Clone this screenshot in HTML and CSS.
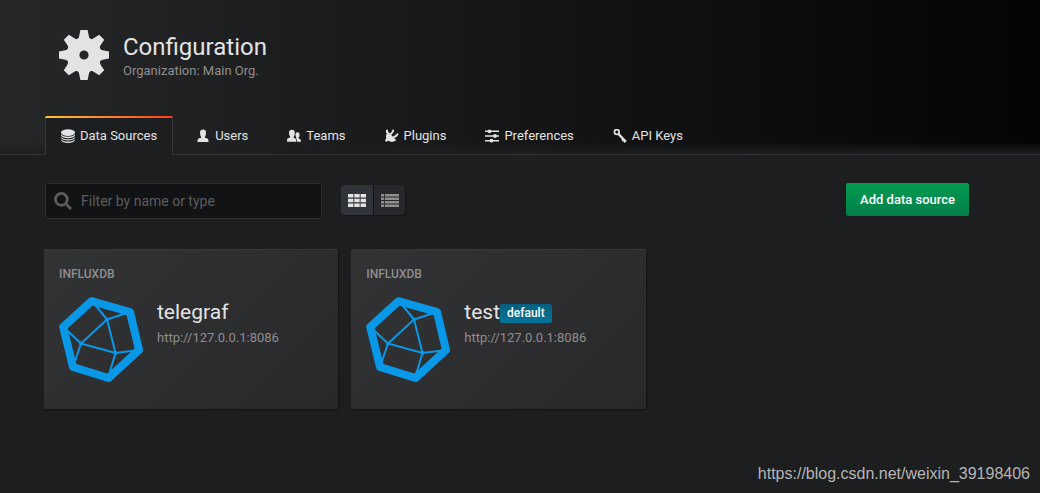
FILE: index.html
```html
<!DOCTYPE html>
<html lang="en">
<head>
<meta charset="utf-8">
<meta name="viewport" content="width=device-width, initial-scale=1">
<title>Configuration: Data Sources</title>
<link rel="stylesheet" href="styles.css">
</head>
<body>
<svg class="sprite" aria-hidden="true">
  <symbol id="influx" viewBox="4 7 85 85">
    <g fill="none" stroke="#0898e7" stroke-linejoin="round">
      <path stroke-width="8" d="M36.500 11.200 75 22 84 60 53.500 88 18 77 8.200 37Z"/>
      <path stroke-width="2" d="M52 29.500 26 53.500 60.500 63ZM37 11 52 29.500 75 22M8.500 37 26 53.500 18 77M53 88 60.500 63 84 60"/>
    </g>
    <g fill="#0898e7"><circle cx="52" cy="29.500" r="2"/><circle cx="26" cy="53.500" r="2"/><circle cx="60.500" cy="63" r="2"/></g>
  </symbol>
</svg>
<header class="page-header">
  <div class="page-title">
    <svg class="page-icon" viewBox="-25 -25 50 50" aria-hidden="true">
      <defs><path id="tooth" d="M-7.500-14Q-4.800-17-4.600-20L-3.600-25H3.600L4.600-20Q4.800-17 7.500-14Z"/></defs>
      <path fill-rule="evenodd" d="M-17.500 0A17.500 17.500 0 1 1 17.500 0A17.500 17.500 0 1 1-17.500 0ZM-4.600 0A4.600 4.600 0 1 0 4.600 0A4.600 4.600 0 1 0-4.600 0Z"/>
      <use href="#tooth"/><use href="#tooth" transform="rotate(45)"/><use href="#tooth" transform="rotate(90)"/><use href="#tooth" transform="rotate(135)"/><use href="#tooth" transform="rotate(180)"/><use href="#tooth" transform="rotate(225)"/><use href="#tooth" transform="rotate(270)"/><use href="#tooth" transform="rotate(315)"/>
    </svg>
    <div>
      <h1>Configuration</h1>
      <p class="page-sub">Organization: Main Org.</p>
    </div>
  </div>
  <nav class="tabs">
    <a class="tab tab-active" href="#sources" aria-current="page"><svg viewBox="0 0 14 14"><ellipse cx="7" cy="3.600" rx="7" ry="3.400"/><path d="M0 5.300Q2 7.800 7 7.800T14 5.300V6.500Q12.500 9.200 7 9.200T0 6.500ZM0 8Q2 10.300 7 10.300T14 8V8.800Q12.500 11.500 7 11.500T0 8.800ZM0 10.300Q2 12.600 7 12.600T14 10.300V11Q12.500 14 7 14T0 11Z"/></svg>Data Sources</a>
    <a class="tab" href="#users"><svg viewBox="0 0 14 14"><path d="M4 3.500Q4 .5 7 .5T10 3.500Q10 6.500 9 8V9L11 9.300Q12.500 10 12.500 12V13H1.500V12Q1.500 10 3 9.300L5 9V8Q4 6.500 4 3.500Z"/></svg>Users</a>
    <a class="tab" href="#teams"><svg viewBox="0 0 14 14"><path d="M2 4Q2 .7 4.900 .7T7.800 4Q7.800 6.500 6.700 8V8.800L8 9.200Q9.400 10 9.400 12.800H0V11Q0 9.500 1.500 9L3.200 8.600V8Q2 6.500 2 4Z"/><path d="M8.400 5.500Q8.400 3.300 10.500 3.300T12.600 5.500Q12.600 7.500 11.600 8.800V9.600L13 10Q14 10.500 14 12.800H10.100Q10.100 10 8.800 8.900L9.500 8.700Q8.400 7.500 8.400 5.500Z"/></svg>Teams</a>
    <a class="tab" href="#plugins"><svg viewBox="0 0 14 14"><path d="M3.200 2.800Q.2 5.500 1.300 9L0 11.500Q.5 13 2 12.500L3.500 11.800Q7 14.300 11.300 11.200Z"/><path d="M1 .8H3V4H1Z"/><path fill="none" stroke="currentColor" stroke-width="1.900" stroke-linecap="round" d="M5.700 5Q7.600 3.600 8.200 1.500M8.800 8.200Q11.200 7.400 12.500 5.200"/></svg>Plugins</a>
    <a class="tab" href="#preferences"><svg viewBox="0 0 14 14"><path d="M0 1.500H14V3H0ZM0 6.200H14V7.700H0ZM0 11H14V12.500H0Z"/><circle cx="4.500" cy="2.300" r="1.900"/><circle cx="10" cy="7" r="1.900"/><circle cx="6.500" cy="11.700" r="1.900"/></svg>Preferences</a>
    <a class="tab" href="#keys"><svg viewBox="0 0 14 14"><g fill="none" stroke="currentColor"><circle cx="3.800" cy="3" r="2.400" stroke-width="1.700"/><path stroke-width="2.400" d="M5.300 4.800 12.300 12.300"/><path stroke-width="2" d="M9 11.800 11 9.800M11 13.300 13 11.300"/></g></svg>API Keys</a>
  </nav>
</header>
<main class="content">
  <div class="toolbar">
    <label class="search">
      <svg viewBox="0 0 17 17" aria-hidden="true"><circle cx="7" cy="7" r="5.600"/><path d="M11 11 16 16"/></svg>
      <input type="text" placeholder="Filter by name or type" aria-label="Filter by name or type">
    </label>
    <div class="layout-switch">
      <button class="layout-button layout-on" type="button" aria-label="Grid view"><svg viewBox="0 0 18 13"><path d="M0 0H5.400V3.600H0ZM6.300 0H11.700V3.600H6.300ZM12.600 0H18V3.600H12.600ZM0 4.700H5.400V8.300H0ZM6.300 4.700H11.700V8.300H6.300ZM12.600 4.700H18V8.300H12.600ZM0 9.400H5.400V13H0ZM6.300 9.400H11.700V13H6.300ZM12.600 9.400H18V13H12.600Z"/></svg></button>
      <button class="layout-button" type="button" aria-label="List view"><svg viewBox="0 0 18 13"><path d="M0 0H3.200V2.500H0ZM4 0H18V2.500H4ZM0 3.500H3.200V6H0ZM4 3.500H18V6H4ZM0 7H3.200V9.500H0ZM4 7H18V9.500H4ZM0 10.500H3.200V13H0ZM4 10.500H18V13H4Z"/></svg></button>
    </div>
    <button class="add-button" type="button">Add data source</button>
  </div>
  <ul class="cards">
    <li><a class="card" href="#telegraf">
      <span class="card-type">INFLUXDB</span>
      <span class="card-body">
        <svg class="card-logo" aria-hidden="true"><use href="#influx"/></svg>
        <span class="card-details"><span class="card-name">telegraf</span><span class="card-url">http://127.0.0.1:8086</span></span>
      </span>
    </a></li>
    <li><a class="card" href="#test">
      <span class="card-type">INFLUXDB</span>
      <span class="card-body">
        <svg class="card-logo" aria-hidden="true"><use href="#influx"/></svg>
        <span class="card-details"><span class="card-name">test<span class="badge">default</span></span><span class="card-url">http://127.0.0.1:8086</span></span>
      </span>
    </a></li>
  </ul>
</main>
<div class="watermark">https://blog.csdn.net/weixin_39198406</div>
</body>
</html>
```

FILE: styles.css
```css
* { box-sizing: border-box; }
body {
  position: relative;
  min-height: 100vh;
  margin: 0;
  background: #1d1e20;
  color: #d8d9da;
  font: 13px/20px Roboto, sans-serif;
}
h1, p, ul { margin: 0; padding: 0; }
a { color: inherit; text-decoration: none; }
button, input { font: inherit; }
.sprite { position: absolute; width: 0; height: 0; }

.page-header {
  padding: 30px 71px 0 45px;
  background:
    linear-gradient(0deg, #1d1e20, transparent 12px),
    linear-gradient(90deg, #262729, #040404);
  border-bottom: 1px solid #343537;
}
.page-title {
  display: flex;
  gap: 14px;
  padding-left: 14px;
  margin-bottom: 36px;
}
.page-icon { width: 50px; height: 50px; fill: #e3e3e3; }
h1 {
  padding-top: 2px;
  font-size: 24px;
  line-height: 30px;
  font-weight: 400;
  color: #e3e3e3;
}
.page-sub { line-height: 18px; color: #8e8e8e; }

.tabs { display: flex; gap: 7px; margin-bottom: -1px; }
.tab {
  display: flex;
  align-items: center;
  gap: 5px;
  height: 39px;
  padding: 0 16px;
  color: #e3e3e3;
}
.tab svg { width: 14px; height: 14px; fill: currentColor; }
.tab-active {
  position: relative;
  padding: 0 15px;
  border: 1px solid #343537;
  border-bottom: 0;
  border-radius: 3px 3px 0 0;
  background: #1d1e20;
}
.tab-active::before {
  content: "";
  position: absolute;
  top: -1px;
  left: -1px;
  right: -1px;
  height: 2px;
  border-radius: 2px 2px 0 0;
  background: linear-gradient(90deg, #ffc835, #ff3c14);
}

.content { padding: 28px 71px 0 45px; }
.toolbar { display: flex; align-items: flex-start; }
.search {
  display: flex;
  align-items: center;
  gap: 9px;
  width: 277px;
  height: 36px;
  padding: 0 9px 0 8px;
  border: 1px solid #2b2c2e;
  border-radius: 2px;
  background: #121315;
}
.search svg {
  flex: none;
  width: 18px;
  height: 18px;
  fill: none;
  stroke: #5c5c5d;
  stroke-width: 2.600;
}
.search input {
  flex: 1;
  min-width: 0;
  padding: 0;
  border: 0;
  outline: 0;
  background: none;
  color: #d8d9da;
  font-size: 14px;
}
.search input::placeholder { color: #5c5c5d; opacity: 1; }
.layout-switch {
  display: flex;
  gap: 1px;
  margin: 2px auto 0 19px;
}
.layout-button {
  display: grid;
  place-items: center;
  width: 31px;
  height: 30px;
  padding: 0;
  border: 0;
  border-radius: 0 4px 4px 0;
  background: #26282b;
  box-shadow: 1px 1px 0 #141517;
}
.layout-button svg { width: 18px; height: 13px; fill: #8e8e8e; }
.layout-on { width: 32px; border-radius: 4px 0 0 4px; background: #303339; }
.layout-on svg { fill: #e3e3e3; }
.add-button {
  height: 33px;
  padding: 0 14px;
  border: 0;
  border-radius: 2px;
  background: linear-gradient(#039a51, #02804a);
  color: #fff;
  font-weight: 500;
}

.cards {
  display: grid;
  grid-template-columns: repeat(3, 1fr);
  margin: 30px 3px 0 -1px;
  list-style: none;
}
.cards li { padding-right: 13px; }
.card {
  display: block;
  min-height: 160px;
  padding: 15px;
  border-radius: 3px;
  background: linear-gradient(135deg, #323335, #29292b);
  box-shadow: inset 0 1px 0 #39393b, 1px 1px 1px #121315;
}
.card-type {
  display: block;
  color: #8e8e8e;
  font-size: 12px;
  line-height: 20px;
  font-weight: 500;
}
.card-body { display: flex; gap: 13px; padding-top: 13px; }
.card-logo { flex: none; width: 85px; height: 85px; }
.card-details { display: block; padding-top: 2px; }
.card-name {
  display: flex;
  align-items: center;
  color: #e3e3e3;
  font-size: 21px;
  line-height: 26px;
}
.badge {
  margin-top: 2px;
  padding: 0 7px;
  border-radius: 2px;
  background: linear-gradient(#035f7e, #057499);
  color: #fff;
  font-size: 12px;
  line-height: 19px;
  font-weight: 500;
}
.card-url { display: block; padding-top: 3px; color: #8e8e8e; }
.watermark {
  position: absolute;
  right: 10px;
  bottom: 9px;
  color: #b5b5b6;
  font: 16px/20px "Liberation Sans", Arial, sans-serif;
}
```
